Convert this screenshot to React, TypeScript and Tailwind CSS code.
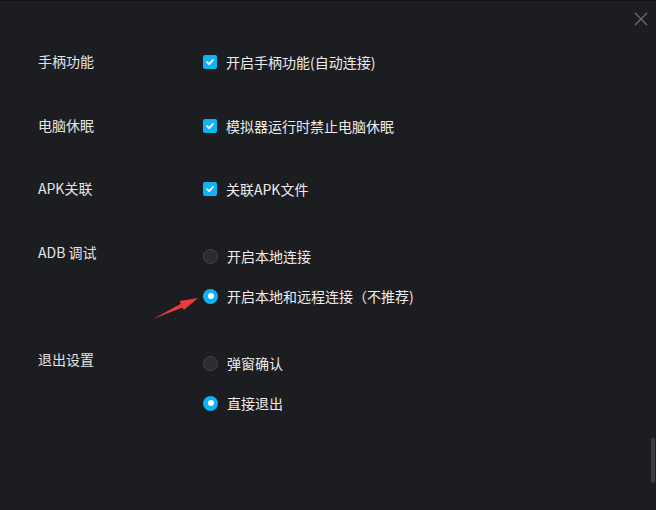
import React from "react";

const font = { fontFamily: '"Microsoft YaHei", "Noto Sans CJK SC", "Noto Sans", sans-serif' };

function Checkbox() {
  return (
    <span className="flex h-[14px] w-[14px] shrink-0 items-center justify-center rounded-[2px] bg-[#0db4f3]">
      <svg width="10" height="10" viewBox="0 0 10 10">
        <path d="M2 5.2 L4.2 7.2 L8 3" fill="none" stroke="#ffffff" strokeWidth="1.8" strokeLinecap="round" strokeLinejoin="round" />
      </svg>
    </span>
  );
}

function Radio({ checked }: { checked: boolean }) {
  return checked ? (
    <span className="flex h-[15px] w-[15px] shrink-0 items-center justify-center rounded-full bg-[#0db4f3]">
      <span className="h-[6px] w-[6px] rounded-full bg-white" />
    </span>
  ) : (
    <span className="h-[15px] w-[15px] shrink-0 rounded-full border border-[#45464b] bg-[#2b2c31]" />
  );
}

function Option({ control, text }: { control: React.ReactNode; text: string }) {
  return (
    <div className="flex h-[20px] items-center gap-[9px]">
      {control}
      <span className="text-[14px] leading-[20px] text-[#ececec]">{text}</span>
    </div>
  );
}

function Section({
  label,
  children,
  offset,
  className,
}: {
  label: string;
  children: React.ReactNode;
  offset: string;
  className: string;
}) {
  return (
    <div className={`flex ${className}`}>
      <div className="w-[165px] shrink-0 text-[14px] leading-[20px] text-[#e4e4e4]">{label}</div>
      <div className={`flex flex-col gap-[20px] ${offset}`}>{children}</div>
    </div>
  );
}

export default function App() {
  return (
    <div className="relative h-[510px] w-[656px] overflow-hidden border-t border-[#121316] bg-[#1c1d21]" style={font}>
      <div className="flex flex-col pl-[38px] pt-[50px]">
        <Section label="手柄功能" offset="pt-[1px]" className="">
          <Option control={<Checkbox />} text="开启手柄功能(自动连接)" />
        </Section>
        <Section label="电脑休眠" offset="pt-[1px]" className="mt-[43px]">
          <Option control={<Checkbox />} text="模拟器运行时禁止电脑休眠" />
        </Section>
        <Section label="APK关联" offset="pt-[1px]" className="mt-[42px]">
          <Option control={<Checkbox />} text="关联APK文件" />
        </Section>
        <Section label="ADB 调试" offset="pt-[4px]" className="mt-[43px]">
          <Option control={<Radio checked={false} />} text="开启本地连接" />
          <Option control={<Radio checked={true} />} text="开启本地和远程连接（不推荐)" />
        </Section>
        <Section label="退出设置" offset="pt-[4px]" className="mt-[43px]">
          <Option control={<Radio checked={false} />} text="弹窗确认" />
          <Option control={<Radio checked={true} />} text="直接退出" />
        </Section>
      </div>

      {/* close button */}
      <svg className="absolute right-[8px] top-[11px]" width="14" height="14" viewBox="0 0 14 14">
        <path d="M1 1 L13 13 M13 1 L1 13" stroke="#6d6e73" strokeWidth="1.3" />
      </svg>

      {/* red arrow annotation */}
      <svg className="absolute left-0 top-0" width="656" height="510" viewBox="0 0 656 510" style={{ pointerEvents: "none" }}>
        <polygon points="153,318 180.9,302.8 179.6,300.1 198,297 183.8,309.1 182.5,306.4" fill="#f03a3a" />
      </svg>

      {/* scrollbar */}
      <div className="absolute right-[1px] top-[437px] h-[45px] w-[4px] rounded-[2px] bg-[#3b3c41]" />
    </div>
  );
}
